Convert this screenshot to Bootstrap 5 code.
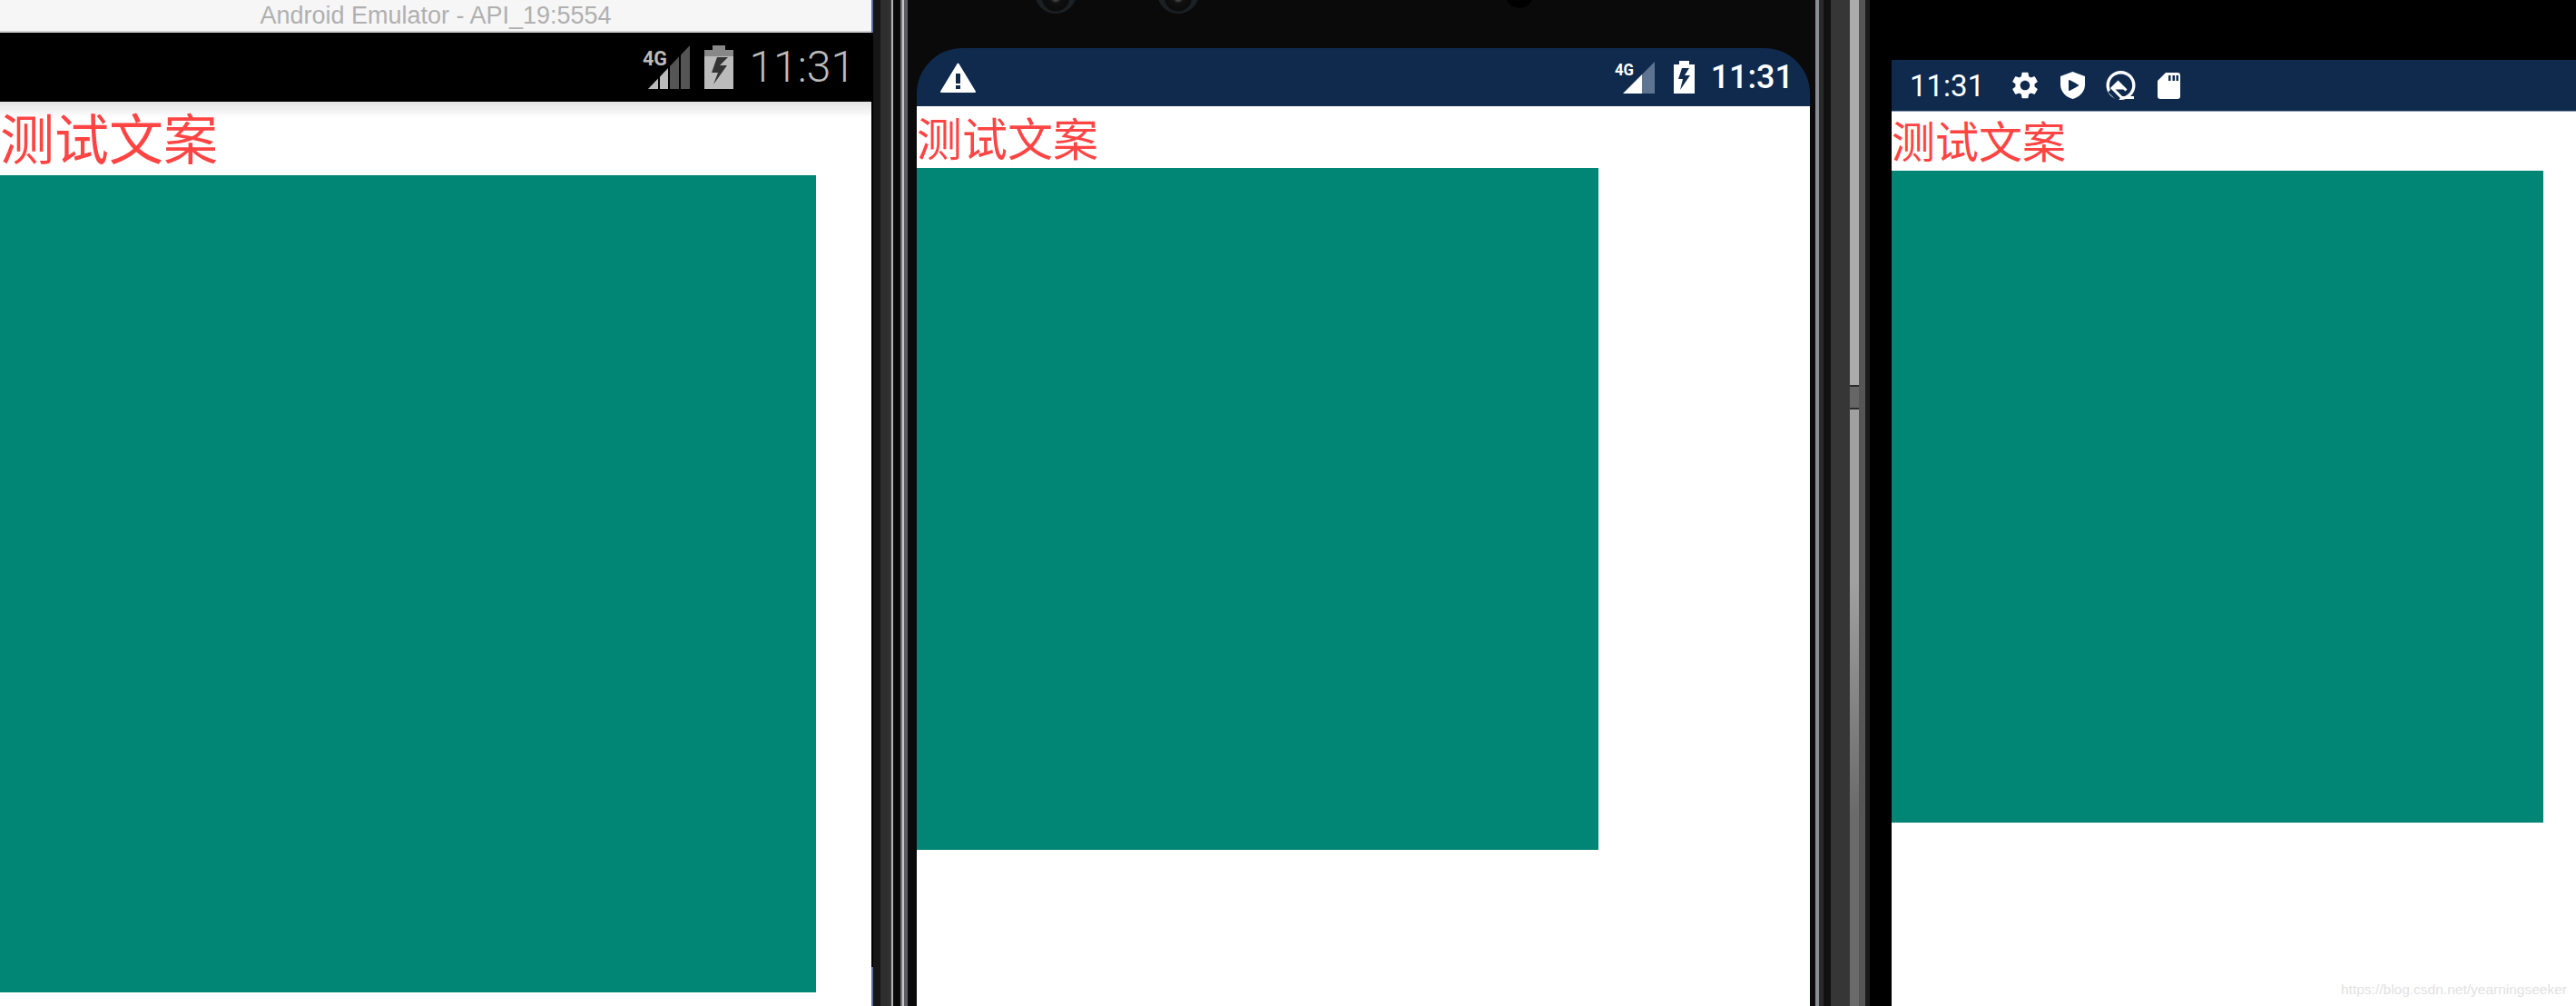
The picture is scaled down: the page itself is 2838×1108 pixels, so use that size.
<!DOCTYPE html>
<html lang="zh-CN">
<head>
    <meta charset="UTF-8">
    <title>Android Emulator - API_19:5554</title>
    <link href="https://cdn.jsdelivr.net/npm/bootstrap@5.3.0/dist/css/bootstrap.min.css" rel="stylesheet">
    <style>
        html, body { height: 1108px; overflow: hidden; background: #fff; }
        .shot { width: 2838px; height: 1108px; }
        .shot svg { display: block; flex: none; }

        /* the three emulator screens and the phone bezels between them */
        .pane-a { width: 960px; }
        .pane-b { width: 984px; background: #0a0a0a; }
        .pane-c { width: 754px; background: #000; }
        .edge-line { width: 2px; background: linear-gradient(to bottom, #5a6fa0 0 36px, #000 36px 1065px, #5a6fa0 1065px); }
        .bezel-a { width: 48px; background: linear-gradient(to right,
            #161616 0 8px, #2e2e2e 8px 18px, #383838 18px 20px, #b4b4b4 20px 22px, #0a0a0a 22px 30px,
            #777 30px 32px, #c8c8c8 32px 34px, #5c5c62 34px 38px, #0a0a0a 38px 48px); }
        .bezel-b { width: 90px; background: linear-gradient(to right,
            #0a0a0a 0 6px, #8c8c94 6px 10px, #2a2a2a 10px 15px, #111 15px 23px, #363636 23px 43px,
            #3a3a3a 43px 54px, #555 54px 61px, #1a1a1a 61px 66px, #000 66px 90px); }
        .side-strip { left: 44px; top: 0; bottom: 0; width: 10px; background: linear-gradient(to bottom, #ababab 0 424px, #2c2c2c 424px 426px, #666 426px 449px, #2c2c2c 449px 451px, #a0a0a0 451px 640px, #6a6a6a 900px); }

        .title-bar { height: 36px; background: #f6f6f6; border-bottom: 2px solid #d0d0d0; color: #b0b0b0; font: 27px "Liberation Sans", sans-serif; }
        .bar-black { height: 76px; background: #000; padding-right: 18px; }
        .bar-b { height: 64px; margin-top: 53px; background: #102a4e; border-radius: 50px 50px 0 0; padding: 0 18px 0 26px; }
        .bar-c { height: 57px; margin-top: 66px; background: #102a4e; border-bottom: 1px solid #8b9ab5; padding: 0 0 0 20px; }

        .clock { font-family: Roboto, sans-serif; line-height: 1; }
        .clock-a { font-size: 48px; font-weight: 300; color: #bbb; margin-left: 17px; }
        .clock-b { font-size: 36px; font-weight: 500; color: #fff; margin-left: 18px; }
        .clock-c { font-size: 33px; font-weight: 400; color: #fff; }

        .copy { color: #ff4444; font-family: "Noto Sans CJK SC", sans-serif; white-space: nowrap; }
        .copy-a { height: 81px; font-size: 60px; line-height: 76px; background: linear-gradient(to bottom, #e4e4e4, #fff 18px); }
        .copy-b { height: 68px; font-size: 50px; line-height: 66px; }
        .copy-c { height: 65px; font-size: 48px; line-height: 60px; }

        .tile { background: #018575; }
        .tile-a { width: 899px; height: 900px; }
        .tile-b { width: 751px; height: 751px; }
        .tile-c { width: 718px; height: 718px; }

        .gap-sig { margin-left: 16px; }
        .gap-batt { margin-left: 21px; }
        .ic-gear { margin-left: 31px; }
        .ic-shield { margin-left: 25px; }
        .ic-q { margin-left: 23px; }
        .ic-sd { margin-left: 24px; }

        .watermark { color: #e2e2e2; font: 15.5px "Liberation Sans", sans-serif; padding: 0 10px 9px 0; line-height: 18px; }

        .cam { top: -31px; width: 46px; height: 46px; border-radius: 50%; background: radial-gradient(circle at 50% 62%, #555 0 2px, #111 6px, #0b0b0b 14px, #1b2024 16px); }
        .cam-1 { left: 130px; }
        .cam-2 { left: 265px; }
        .cam-3 { left: 649px; top: -21px; width: 30px; height: 30px; background: #000; }
    </style>
</head>
<body>
<div class="shot d-flex">

    <!-- left: API 19 emulator window -->
    <div class="pane-a d-flex flex-column bg-white">
        <div class="title-bar d-flex align-items-center justify-content-center">Android Emulator - API_19:5554</div>
        <div class="bar-black d-flex align-items-center justify-content-end">
            <svg width="52" height="48" viewBox="0 0 52 48">
                <polygon fill="#bbb" points="6,48 17,48 17,36.5"/>
                <polygon fill="#bbb" points="19,48 28,48 28,25 19,34.4"/>
                <polygon fill="#555" points="30,48 40,48 40,12.5 30,23"/>
                <polygon fill="#555" points="42,48 52,48 52,0 42,10.4"/>
                <text x="0" y="22" fill="#bbb" font-family="Roboto, sans-serif" font-weight="700" font-size="22" textLength="27" lengthAdjust="spacingAndGlyphs">4G</text>
            </svg>
            <svg class="gap-sig" width="32" height="48" viewBox="0 0 32 48">
                <path fill="#888" d="M0 5h9V0h14v5h9v8H0z"/>
                <path fill="#bbb" d="M0 12h32v36H0z"/>
                <path fill="#333" d="M26 13H14L8 30h7l-5 13 15-21h-8z"/>
            </svg>
            <span class="clock clock-a">11:31</span>
        </div>
        <div class="copy copy-a">测试文案</div>
        <div class="tile tile-a"></div>
    </div>
    <div class="edge-line"></div>
    <div class="bezel-a"></div>

    <!-- middle: notched phone -->
    <div class="pane-b d-flex flex-column position-relative overflow-hidden">
        <div class="cam cam-1 position-absolute"></div>
        <div class="cam cam-2 position-absolute"></div>
        <div class="cam cam-3 position-absolute"></div>
        <div class="bar-b d-flex align-items-center">
            <svg width="39" height="33" viewBox="0 0 39 33">
                <path fill="#fff" stroke="#fff" stroke-width="2" stroke-linejoin="round" d="M19.500 1.500 38 32H1z"/>
                <path fill="#102a4e" d="M17 12h5v11h-5zM17 25h5v4h-5z"/>
            </svg>
            <div class="d-flex align-items-center ms-auto">
                <svg width="44" height="35" viewBox="0 0 44 35">
                    <polygon fill="#fff" points="9,35 30,35 30,14"/>
                    <polygon fill="#5f7490" points="30,35 44,35 44,0 30,14"/>
                    <text x="0" y="15" fill="#fff" font-family="Roboto, sans-serif" font-weight="700" font-size="18" textLength="21" lengthAdjust="spacingAndGlyphs">4G</text>
                </svg>
                <svg class="gap-batt" width="23" height="36" viewBox="0 0 23 36">
                    <path fill="#fff" d="M0 4h6V0h11v4h6v32H0z"/>
                    <path fill="#102a4e" d="M17 8H9L5 20h5l-3 12 11-16h-6z"/>
                </svg>
                <span class="clock clock-b">11:31</span>
            </div>
        </div>
        <div class="bg-white flex-grow-1">
            <div class="copy copy-b">测试文案</div>
            <div class="tile tile-b"></div>
        </div>
    </div>
    <div class="bezel-b position-relative"><div class="side-strip position-absolute"></div></div>

    <!-- right: API 29 phone -->
    <div class="pane-c d-flex flex-column">
        <div class="bar-c d-flex align-items-center">
            <span class="clock clock-c">11:31</span>
            <svg class="ic-gear" width="28" height="30" viewBox="2.5 2 19 20">
                <path fill="#fff" d="M19.14 12.94c.04-.3.06-.61.06-.94 0-.32-.02-.64-.07-.94l2.03-1.58c.18-.14.23-.41.12-.61l-1.92-3.32c-.12-.22-.37-.29-.59-.22l-2.39.96c-.5-.38-1.03-.7-1.62-.94l-.36-2.54c-.04-.24-.24-.41-.48-.41h-3.84c-.24 0-.43.17-.47.41l-.36 2.54c-.59.24-1.13.57-1.62.94l-2.39-.96c-.22-.08-.47 0-.59.22L2.74 8.87c-.12.21-.08.47.12.61l2.03 1.58c-.05.3-.09.63-.09.94s.02.64.07.94l-2.03 1.58c-.18.14-.23.41-.12.61l1.92 3.32c.12.22.37.29.59.22l2.39-.96c.5.38 1.03.7 1.62.94l.36 2.54c.05.24.24.41.48.41h3.84c.24 0 .44-.17.47-.41l.36-2.54c.59-.24 1.13-.56 1.62-.94l2.39.96c.22.08.47 0 .59-.22l1.92-3.32c.12-.22.07-.47-.12-.61l-2.01-1.58zM12 15.6c-1.98 0-3.6-1.62-3.6-3.6s1.62-3.6 3.6-3.6 3.6 1.62 3.6 3.6-1.62 3.6-3.6 3.6z"/>
            </svg>
            <svg class="ic-shield" width="27" height="30" viewBox="0 0 27 30">
                <path fill="#fff" d="M13.5 0 27 5v9c0 8-6 14-13.5 16C6 28 0 22 0 14V5z"/>
                <path fill="#102a4e" stroke="#102a4e" stroke-width="2" stroke-linejoin="round" d="M10 10l9 5-9 5z"/>
            </svg>
            <svg class="ic-q" width="33" height="32" viewBox="0 0 33 32">
                <circle cx="16.500" cy="16" r="14.300" fill="none" stroke="#fff" stroke-width="3.400"/>
                <path fill="none" stroke="#102a4e" stroke-width="7" d="M5 21l10 10"/>
                <path fill="none" stroke="#fff" stroke-width="3" d="M22.500 21.500l-9-9-6.500 6.500 10.500 10.500H31"/>
                <path fill="#fff" d="M13.500 12.500l8 8h-15z"/>
            </svg>
            <svg class="ic-sd" width="25" height="29" viewBox="0 0 25 29">
                <path fill="#fff" d="M9 0h13a3 3 0 0 1 3 3v23a3 3 0 0 1-3 3H3a3 3 0 0 1-3-3V9z"/>
                <path fill="#102a4e" d="M12 3h2.500v6H12zM16.500 3H19v6h-2.500zM20.500 3H23v6h-2.500z"/>
            </svg>
        </div>
        <div class="bg-white flex-grow-1 d-flex flex-column">
            <div class="copy copy-c">测试文案</div>
            <div class="tile tile-c"></div>
            <div class="watermark mt-auto text-end">https://blog.csdn.net/yearningseeker</div>
        </div>
    </div>
</div>
<script src="https://cdn.jsdelivr.net/npm/bootstrap@5.3.0/dist/js/bootstrap.bundle.min.js"></script>
</body>
</html>
